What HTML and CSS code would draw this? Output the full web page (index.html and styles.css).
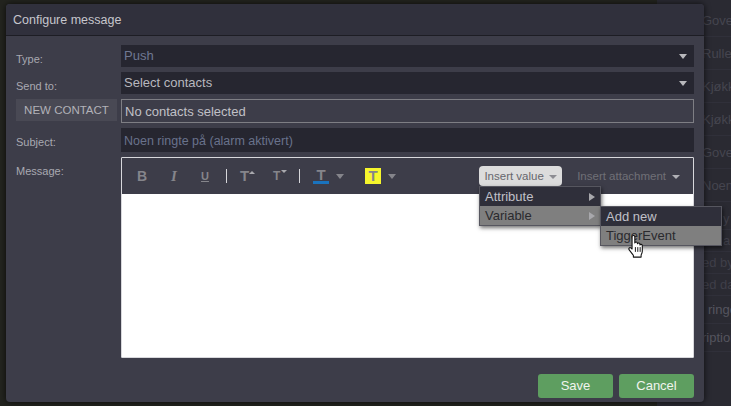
FILE: index.html
```html
<!DOCTYPE html>
<html>
<head>
<meta charset="UTF-8">
<title>Configure message</title>
<link rel="stylesheet" href="styles.css">
</head>
<body>
	<div class="backdrop">
		<div class="behindList">
			<div class="behindRow">Gover</div>
			<div class="behindRow">Rulleg</div>
			<div class="behindRow">Kjøkk</div>
			<div class="behindRow">Kjøkk</div>
			<div class="behindRow">Gover</div>
			<div class="behindRow">Noen</div>
			<div class="behindRow lower first">y</div>
			<div class="behindRow lower second">a</div>
			<div class="behindRow lower">ed by</div>
			<div class="behindRow lower">ed da</div>
			<div class="behindRow lower bright ringRow">ringe</div>
			<div class="behindRow lower bright">ription</div>
		</div>
	</div>

	<div class="modal">
		<div class="modalHeader">Configure message</div>
		<div class="modalBody">
			<div class="formRow">
				<label class="rowLabel">Type:</label>
				<div class="selectBox muted">Push<span class="selectArrow"></span></div>
			</div>
			<div class="formRow">
				<label class="rowLabel">Send to:</label>
				<div class="selectBox">Select contacts<span class="selectArrow"></span></div>
			</div>
			<div class="formRow">
				<div class="newContact">NEW CONTACT</div>
				<div class="contactsBox">No contacts selected</div>
			</div>
			<div class="formRow">
				<label class="rowLabel">Subject:</label>
				<div class="subjectBox">Noen ringte på (alarm aktivert)</div>
			</div>
			<div class="formRow messageRow">
				<label class="rowLabel">Message:</label>
				<div class="editor">
					<div class="toolbar">
						<span class="tool toolB">B</span>
						<span class="tool toolI">I</span>
						<span class="tool toolU">U</span>
						<span class="toolSep"></span>
						<span class="tool toolUp">T<span class="miniUp"></span></span>
						<span class="tool toolDown">T<span class="miniDown"></span></span>
						<span class="toolSep second"></span>
						<span class="tool toolColor">T</span>
						<span class="toolArrow"></span>
						<span class="tool toolHighlight">T</span>
						<span class="toolArrow"></span>
						<div class="toolbarRight">
							<div class="insertValue">Insert value<span class="btnArrow"></span></div>
							<div class="insertAttachment">Insert attachment<span class="btnArrow"></span></div>
						</div>
					</div>
					<div class="editArea"></div>
				</div>
			</div>
			<div class="modalFooter">
				<div class="greenBtn">Save</div>
				<div class="greenBtn">Cancel</div>
			</div>
		</div>

		<div class="menu valueMenu">
			<div class="menuItem">Attribute<span class="subArrow"></span></div>
			<div class="menuItem active">Variable<span class="subArrow"></span></div>
		</div>
		<div class="menu variableMenu">
			<div class="menuItem">Add new</div>
			<div class="menuItem active">TiggerEvent</div>
		</div>
		<svg class="handCursor" width="18" height="25" viewBox="0 0 15 21">
			<path d="M4.500 1.600c.8-.8 1.900-.3 2 .7v5.200c.2-1 2-1 2.200.1v.6c.3-1 2-.9 2.100.2v.8c.4-.8 1.900-.6 2 .4v4.900c0 1.400-.5 2.200-1 3.100v1.800H5.300v-1.500L1.800 13.300c-.9-1.100.3-2.400 1.400-1.600l1 .9V2.300c0-.3.1-.5.300-.7z" fill="#fff" stroke="#111" stroke-width="0.900" stroke-linejoin="round"/>
			<path d="M7 11v4M9 11v4M11 11v4" stroke="#111" stroke-width="0.800" fill="none"/>
		</svg>
	</div>
</body>
</html>
```

FILE: styles.css
```css
* {
	box-sizing: border-box;
}

html, body {
	margin: 0px;
	height: 100%;
}

body {
	width: 731px;
	height: 406px;
	overflow: hidden;
	background-color: #23241f;
	font-family: "Liberation Sans", Arial, sans-serif;
	position: relative;
}

.backdrop {
	height: 100%;
	display: flex;
	justify-content: flex-end;
}

.behindList {
	width: 74px;
	height: 100%;
	padding-top: 4px;
	padding-left: 45px;
	background-color: #2a2a32;
	color: #45454f;
	font-size: 13px;
}

.behindRow {
	height: 33px;
	line-height: 33px;
	border-bottom: 1px solid #30303a;
	white-space: nowrap;
	overflow: hidden;
}

.behindRow.lower {
	color: #3f3f49;
	height: 22px;
	line-height: 22px;
}

.behindRow.first {
	margin-top: 6px;
	padding-left: 21px;
}

.behindRow.second {
	padding-left: 21px;
}

.behindRow.bright {
	color: #55555f;
	height: 28px;
	line-height: 28px;
}

.behindRow.ringRow {
	padding-left: 6px;
}

.modal {
	position: absolute;
	left: 6px;
	top: 4px;
	width: 698px;
	height: 398px;
	border-radius: 4px;
	background-color: #3d3d49;
	box-shadow: 0px 0px 6px rgba(0, 0, 0, 0.7);
	display: flex;
	flex-direction: column;
}

.modalHeader {
	height: 32px;
	padding-left: 7px;
	padding-top: 1px;
	line-height: 31px;
	font-size: 12.500px;
	color: #c6c6cc;
	background-color: #30303c;
	border-radius: 4px 4px 0px 0px;
	border-bottom: 1px solid #1d1d24;
}

.modalBody {
	flex: 1;
	padding: 9px 10px 5px 10px;
	display: flex;
	flex-direction: column;
}

.formRow {
	display: grid;
	grid-template-columns: 105px 573px;
	margin-bottom: 5px;
}

.rowLabel {
	font-size: 11px;
	color: #a9a9b1;
	padding-top: 6px;
	line-height: 16px;
}

.selectBox {
	height: 22px;
	line-height: 22px;
	padding-left: 3px;
	font-size: 13px;
	color: #b8b8be;
	background-color: #262630;
	position: relative;
}

.selectBox.muted {
	color: #6f7892;
}

.selectArrow {
	position: absolute;
	right: 7px;
	top: 9px;
	border-left: 4px solid transparent;
	border-right: 4px solid transparent;
	border-top: 5px solid #b9b9bd;
}

.newContact {
	width: 101px;
	height: 22px;
	line-height: 23px;
	text-align: center;
	font-size: 11.500px;
	color: #b2b2b8;
	background-color: #494954;
}

.contactsBox {
	height: 24px;
	line-height: 23px;
	padding-left: 3px;
	font-size: 13px;
	color: #c0c0c6;
	background-color: #3d3d49;
	border: 1px solid #7e7e84;
}

.subjectBox {
	height: 24px;
	line-height: 26px;
	padding-left: 3px;
	font-size: 12.500px;
	color: #69728c;
	background-color: #262630;
}

.messageRow {
	margin-bottom: 0px;
}

.editor {
	height: 201px;
	border: 1px solid #d8d8dc;
	border-radius: 1px;
	background-color: #ffffff;
	display: flex;
	flex-direction: column;
}

.toolbar {
	height: 36px;
	padding-left: 15px;
	display: flex;
	align-items: center;
	background-color: #3d3d49;
	color: #85858b;
	font-size: 14px;
	font-weight: bold;
}

.tool {
	display: block;
	position: relative;
	line-height: 16px;
	text-align: center;
}

.toolB {
	width: 10px;
	margin-right: 23px;
}

.toolI {
	width: 8px;
	margin-right: 22px;
	font-style: italic;
	font-family: "Liberation Serif", serif;
	font-size: 15px;
}

.toolU {
	width: 10px;
	margin-right: 16px;
	text-decoration: underline;
	font-size: 11px;
}

.toolSep {
	width: 1px;
	height: 14px;
	margin-right: 13px;
	background-color: #d6d6da;
}

.toolSep.second {
	margin-right: 13px;
}

.toolUp {
	width: 15px;
	margin-right: 18px;
	font-size: 15px;
	text-align: left;
}

.toolDown {
	width: 14px;
	margin-right: 12px;
	font-size: 12px;
	text-align: left;
}

.miniUp {
	position: absolute;
	right: 0px;
	top: 3px;
	border-left: 3px solid transparent;
	border-right: 3px solid transparent;
	border-bottom: 3px solid #a9a9ae;
}

.miniDown {
	position: absolute;
	right: 0px;
	top: 2px;
	border-left: 3px solid transparent;
	border-right: 3px solid transparent;
	border-top: 3px solid #a9a9ae;
}

.toolColor {
	width: 16px;
	height: 16px;
	margin-right: 7px;
	font-size: 15px;
	line-height: 13px;
	border-bottom: 3px solid #1a73bd;
}

.toolHighlight {
	width: 16px;
	height: 16px;
	margin-left: 21px;
	margin-right: 7px;
	font-size: 15px;
	background-color: #f6f62c;
}

.toolArrow {
	border-left: 4px solid transparent;
	border-right: 4px solid transparent;
	border-top: 5px solid #85858b;
	margin-top: 1px;
}

.toolbarRight {
	margin-left: auto;
	display: flex;
	align-items: center;
	font-weight: normal;
	font-size: 11.500px;
}

.insertValue {
	width: 83px;
	height: 20px;
	margin-right: 15px;
	line-height: 20px;
	text-align: center;
	color: #66666c;
	background-color: #dcdcdc;
	border-radius: 4px;
}

.insertAttachment {
	margin-right: 13px;
	color: #707077;
}

.btnArrow {
	display: inline-block;
	margin-left: 5px;
	vertical-align: 1px;
	border-left: 4px solid transparent;
	border-right: 4px solid transparent;
	border-top: 4px solid #8c8c92;
}

.insertAttachment .btnArrow {
	margin-left: 6px;
	border-top-color: #b0b0b5;
}

.editArea {
	flex: 1;
	background-color: #ffffff;
}

.modalFooter {
	margin-top: 16px;
	display: flex;
	justify-content: flex-end;
	gap: 6px;
}

.greenBtn {
	width: 75px;
	height: 24px;
	line-height: 24px;
	text-align: center;
	font-size: 13px;
	color: #f0f4ee;
	background-color: #5e9e60;
	border-radius: 3px;
}

.menu {
	position: absolute;
	font-size: 13px;
	border: 1px solid #56565f;
	box-shadow: 1px 2px 4px rgba(0, 0, 0, 0.55);
}

.valueMenu {
	left: 473px;
	top: 182px;
	width: 122px;
}

.variableMenu {
	left: 594px;
	top: 202px;
	width: 122px;
}

.menuItem {
	height: 19px;
	line-height: 20px;
	padding-left: 5px;
	color: #c0c0c8;
	background-color: #2f2f3a;
	position: relative;
}

.menuItem.active {
	color: #2a2a2e;
	background-color: #7f7f7f;
}

.subArrow {
	position: absolute;
	right: 5px;
	top: 6px;
	border-top: 4px solid transparent;
	border-bottom: 4px solid transparent;
	border-left: 6px solid #a8a8ac;
}

.handCursor {
	position: absolute;
	left: 621px;
	top: 230px;
}
```
